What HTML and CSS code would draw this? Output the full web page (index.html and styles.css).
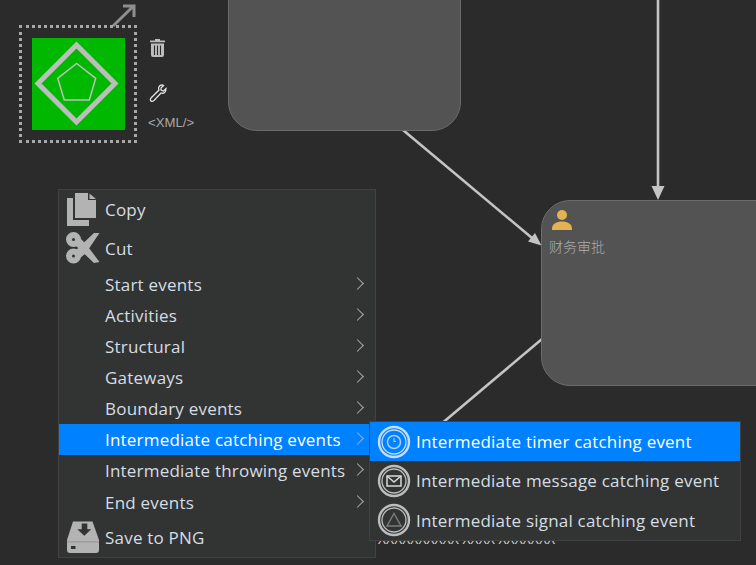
FILE: index.html
```html
<!DOCTYPE html>
<html lang="en">
<head>
<meta charset="utf-8">
<title>Process editor</title>
<link rel="stylesheet" href="styles.css">
</head>
<body>
<div class="canvas">
  <svg class="edges" width="756" height="565" viewBox="0 0 756 565">
    <path d="M403 130 L532 238" class="edge"/>
    <path d="M541.500 245.500 L528 241.500 L535 233 Z" class="head" />
    <path d="M658 0 V188" class="edge"/>
    <path d="M658 200 L651.500 186 H664.500 Z" class="head"/>
    <path d="M542 339 L440 425" class="edge"/>
  </svg>
  <div class="node node-top"></div>
  <div class="node node-right">
    <svg class="user" width="22" height="26" viewBox="0 0 22 26"><circle cx="11" cy="6" r="5" fill="#e3b252"/><path d="M1 21 V19.500 C1 15 6 12.500 11 12.500 S21 15 21 19.500 V21 Z" fill="#e3b252"/></svg>
    <span class="node-label">财务审批</span>
  </div>
  <span class="hidden-label">XXXXXXXXXX XXXX XXXXXXX</span>

  <svg class="move" width="30" height="30" viewBox="0 0 30 30"><path d="M5 26 L25 6.500 M15 6 H26 V17" fill="none" stroke="#8f8f8f" stroke-width="3"/></svg>
  <div class="selection">
    <svg class="gateway" width="93" height="92" viewBox="0 0 93 92">
      <rect width="93" height="92" fill="#00b800"/>
      <path d="M44.500 7 L83 45.500 L44.500 84 L6 45.500 Z" fill="none" stroke="#bdbdbd" stroke-width="5"/>
      <path d="M44.700 25.500 L63.700 40.300 L57.300 62 L32.300 62 L25.700 40.300 Z" fill="none" stroke="#bdbdbd" stroke-width="1.500"/>
    </svg>
  </div>
  <div class="tools">
    <svg width="18" height="20" viewBox="0 0 18 20"><path d="M3 5.500 H16 V17 Q16 19 14 19 H5 Q3 19 3 17 Z M2 2.500 H7 V1 H12 V2.500 H17 V4.300 H2 Z" fill="#bdbdbd"/><path d="M6.500 7.500 V17 M9.500 7.500 V17 M12.500 7.500 V17" stroke="#2b2b2b" stroke-width="1.100"/></svg>
    <svg class="wrench" width="18" height="18" viewBox="0 0 18 18"><path d="M13 1 C10 1 9 4 10 6 L2 14 C1 15.500 1 16 2 17 C3 18 3.500 17.500 5 16.500 L12 9 C15 10 17 8 17 4.500 L14.500 7 L12 6 L12 4 L14.500 1.500 Z" fill="none" stroke="#e2e2e2" stroke-width="1.300"/></svg>
    <span class="xml">&lt;XML/&gt;</span>
  </div>

  <nav class="menu">
    <div class="item item-copy"><svg class="ico" width="32" height="34" viewBox="0 0 32 34"><path d="M9 0 H22 V7 H30 V25 H9 Z M23.500 0.500 L30 6 H23.500 Z" fill="#b3b3b3"/><path d="M1 5 H7 V27 H23 V33 H1 Z" fill="#b3b3b3"/></svg><span>Copy</span></div>
    <div class="item item-cut"><svg class="ico" width="34" height="32" viewBox="0 0 34 32"><path d="M9 19 L28 1 L33.500 1 L20 21 L13 27 Z M9 13 L14 6 L20 12 L33.500 30 L28 31 Z" fill="#b3b3b3"/><circle cx="7.500" cy="7.500" r="4.500" fill="#323433" stroke="#b3b3b3" stroke-width="6"/><circle cx="7.500" cy="24" r="4.500" fill="#323433" stroke="#b3b3b3" stroke-width="6"/></svg><span>Cut</span></div>
    <div class="item"><span>Start events</span><i class="chev"></i></div>
    <div class="item"><span>Activities</span><i class="chev"></i></div>
    <div class="item"><span>Structural</span><i class="chev"></i></div>
    <div class="item"><span>Gateways</span><i class="chev"></i></div>
    <div class="item"><span>Boundary events</span><i class="chev"></i></div>
    <div class="item active"><span>Intermediate catching events</span><i class="chev"></i></div>
    <div class="item"><span>Intermediate throwing events</span><i class="chev"></i></div>
    <div class="item item-end"><span>End events</span><i class="chev"></i></div>
    <div class="item item-save"><svg class="ico" width="34" height="33" viewBox="0 0 34 33"><path d="M7 0.500 H26.500 L33 19 V29 Q33 32 30 32 H4 Q1 32 1 29 V19 Z" fill="#b3b3b3"/><path d="M15.700 2.500 H21.300 V8.300 H25.300 L18.300 14.700 L11.300 8.300 H15.700 Z" fill="#323433"/><rect x="5" y="25" width="4.500" height="3" fill="#323433"/><rect x="1" y="20.500" width="32" height="0.800" fill="#8a8a8a"/></svg><span>Save to PNG</span></div>
  </nav>

  <nav class="submenu">
    <div class="sub active">
      <svg width="34" height="34" viewBox="0 0 34 34" class="sub-ico"><circle cx="17" cy="17" r="15" class="ring" stroke="#c4dcf5"/><circle cx="17" cy="17" r="12" class="ring-thin" stroke="#c4dcf5"/><circle cx="17" cy="17" r="6.500" fill="none" stroke="#a9d0f8" stroke-width="1.500"/><path d="M17 13 V16.500 H19" fill="none" stroke="#a9d0f8" stroke-width="1.200"/></svg>
      <span>Intermediate timer catching event</span>
    </div>
    <div class="sub">
      <svg width="34" height="34" viewBox="0 0 34 34" class="sub-ico"><circle cx="17" cy="17" r="15" class="ring" stroke="#bdbdbd"/><circle cx="17" cy="17" r="12" class="ring-thin" stroke="#bdbdbd"/><rect x="10" y="12" width="14" height="10" fill="none" stroke="#d8d8d8" stroke-width="1.500"/><path d="M10 12 L17 18 L24 12" fill="none" stroke="#d8d8d8" stroke-width="1.500"/></svg>
      <span>Intermediate message catching event</span>
    </div>
    <div class="sub">
      <svg width="34" height="34" viewBox="0 0 34 34" class="sub-ico"><circle cx="17" cy="17" r="15" class="ring" stroke="#bdbdbd"/><circle cx="17" cy="17" r="12" class="ring-thin" stroke="#bdbdbd"/><path d="M17 10.500 L24 23 H10 Z" fill="none" stroke="#7a7a7a" stroke-width="1.500"/></svg>
      <span>Intermediate signal catching event</span>
    </div>
  </nav>
</div>
</body>
</html>
```
FILE: styles.css
```css
* { box-sizing: border-box; }
html, body { margin: 0; padding: 0; }
body { background: #2b2b2b; overflow: hidden; }
.canvas { position: relative; width: 756px; height: 565px; overflow: hidden; background: #2b2b2b; font-family: "Open Sans", "Noto Sans", "Noto Sans CJK SC", sans-serif; }
.edges { position: absolute; left: 0; top: 0; }
.edge { fill: none; stroke: #c4c4c4; stroke-width: 2.600; }
.head { fill: #c4c4c4; }
.node { position: absolute; background: #535353; border: 1px solid #6b6b6b; border-radius: 29px; }
.node-top { left: 228px; top: -60px; width: 233px; height: 191px; }
.node-right { left: 541px; top: 200px; width: 260px; height: 186px; padding: 8px 0 0 7px; }
.user { display: block; margin-left: 2px; }
.node-label { display: block; margin-top: 1px; font-size: 14px; line-height: 20px; font-weight: 300; color: #adadad; font-family: "Noto Sans CJK SC", sans-serif; }
.hidden-label { position: absolute; left: 378px; top: 530px; font-size: 14px; line-height: 18px; color: #d0d0d0; white-space: nowrap; }
.move { position: absolute; left: 108px; top: 0; }
.selection { position: absolute; left: 19px; top: 25px; width: 118px; height: 118px; padding: 10px; border: 3px dotted #a8a8a8; }
.gateway { display: block; }
.tools { position: absolute; left: 148px; top: 38px; display: flex; flex-direction: column; align-items: flex-start; }
.wrench { margin-top: 26px; margin-left: 1px; }
.xml { margin-top: 13px; font-size: 13.200px; line-height: 16px; color: #a8a8a8; font-family: "Liberation Sans", sans-serif; }
.menu { position: absolute; left: 58px; top: 189px; width: 318px; height: 369px; background: #323433; border: 1px solid #414141; }
.item { display: flex; position: relative; align-items: center; height: 31px; padding-left: 46px; font-size: 17px; letter-spacing: .21px; color: #d6dde4; white-space: nowrap; }
.item-copy { height: 39px; }
.item-cut { height: 40px; padding-bottom: 2px; }
.item-end { margin-top: 1px; }
.item-save { height: 39px; }
.item.active { background: #0081ff; color: #fff; }
.item-copy .ico { position: absolute; left: 7px; top: 3px; }
.item-cut .ico { position: absolute; left: 7px; top: 3px; }
.item-save .ico { position: absolute; left: 7px; top: 3px; }
.chev { position: absolute; left: 294px; top: 10px; width: 9px; height: 9px; border-top: 1.800px solid #ababab; border-right: 1.800px solid #ababab; transform: rotate(45deg); }
.submenu { position: absolute; left: 369px; top: 421px; width: 372px; height: 120px; background: #323433; border: 1px solid #414141; }
.sub { display: flex; align-items: center; height: 39.300px; padding-left: 7px; gap: 5px; font-size: 17px; letter-spacing: .21px; color: #d6dde4; white-space: nowrap; }
.sub.active { background: #0081ff; color: #fff; }
.sub-ico { flex: none; }
.ring { fill: none; stroke-width: 2.400; }
.ring-thin { fill: none; stroke-width: 1.300; }
```
